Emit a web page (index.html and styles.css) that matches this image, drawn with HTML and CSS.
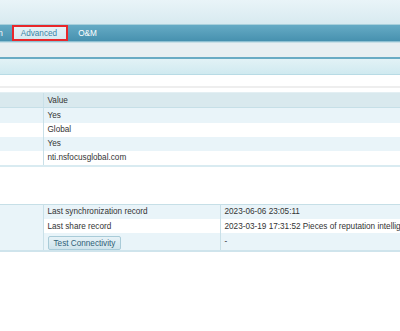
FILE: index.html
```html
<!DOCTYPE html>
<html>
<head>
    <meta charset="UTF-8">
    <link rel="stylesheet" href="styles.css">
</head>
<body>
    <div class="top-banner"></div>

    <div class="tab-bar">
        <div class="tabs">
            <span class="tab">Configuration</span>
            <span class="tab tab-active">Advanced</span>
            <span class="tab">O&amp;M</span>
        </div>
    </div>

    <div class="toolbar"></div>
    <div class="sub-bar"></div>

    <div class="content">
        <div class="divider"></div>

        <table class="grid grid-info">
            <thead>
                <tr>
                    <th class="col-label"></th>
                    <th>Value</th>
                </tr>
            </thead>
            <tbody>
                <tr class="odd tall"><td></td><td>Yes</td></tr>
                <tr><td></td><td>Global</td></tr>
                <tr class="odd"><td></td><td>Yes</td></tr>
                <tr class="tall"><td></td><td>nti.nsfocusglobal.com</td></tr>
            </tbody>
        </table>

        <table class="grid grid-records">
            <tbody>
                <tr class="odd tall">
                    <td class="col-label side" rowspan="3"></td>
                    <td class="col-name">Last synchronization record</td>
                    <td>2023-06-06 23:05:11</td>
                </tr>
                <tr>
                    <td class="col-name">Last share record</td>
                    <td>2023-03-19 17:31:52 Pieces of reputation intelligence shared: 0</td>
                </tr>
                <tr class="odd row-button">
                    <td class="col-name"><button class="btn">Test Connectivity</button></td>
                    <td>-</td>
                </tr>
            </tbody>
        </table>
    </div>
</body>
</html>
```

FILE: styles.css
```css
* {
    margin: 0;
    padding: 0;
    box-sizing: border-box;
}

body {
    font-family: "Liberation Sans", Arial, sans-serif;
    font-size: 8.2px;
    color: #333;
    background: #fff;
    overflow: hidden;
}

.top-banner {
    height: 25px;
    background: linear-gradient(to bottom, #e9f4f8 0%, #d8eaf0 100%);
    border-bottom: 1px solid #a8d0dc;
}

.tab-bar {
    height: 17px;
    background: linear-gradient(to bottom, #66abc5 0%, #4791af 100%);
    border-bottom: 1px solid #8fc0d2;
    overflow: hidden;
}

.tabs {
    display: flex;
    align-items: stretch;
    height: 100%;
    margin-left: -54px;
}

.tab {
    display: flex;
    align-items: center;
    padding: 0 8px;
    color: #fff;
    white-space: nowrap;
}

.tab:first-child {
    padding-right: 9px;
}

.tab-active {
    padding: 0 9px 0 7px;
    margin-right: 2px;
    color: #3b84a6;
    background: linear-gradient(to bottom, #e6f2f6 0%, #d6e9f0 100%);
    border: 2px solid #e8272a;
}

.toolbar {
    height: 17px;
    background: #e8eff2;
    border-top: 1px solid #c9dfe7;
    border-bottom: 2px solid #6aabc4;
}

.sub-bar {
    height: 16px;
    background: linear-gradient(to bottom, #e2f2f6 0%, #d0eaf0 100%);
    border-bottom: 1px solid #b8dbe5;
}

.content {
    padding-top: 11px;
}

.divider {
    height: 2px;
    background: #eeeeee;
    margin-bottom: 4px;
}

.grid {
    width: 100%;
    border-collapse: collapse;
    table-layout: fixed;
}

.grid th,
.grid td {
    padding: 0 4px;
    text-align: left;
    font-weight: normal;
    white-space: nowrap;
    overflow: hidden;
}

.col-label {
    width: 43px;
}

.grid th {
    height: 15px;
    background: #d9e9ee;
    border-bottom: 1px solid #c6dfe7;
    border-top: 1px solid #e3eff3;
}

.grid th + th,
.grid td + td {
    border-left: 1px solid #c9e0e8;
}

.grid-info td {
    height: 14px;
}

.grid-info .tall td {
    height: 15px;
}

.grid-info tbody tr:last-child td {
    border-bottom: 2px solid #d9ebf1;
}

.odd td {
    background: #e9f4f9;
}

.grid-records {
    margin-top: 37px;
    border-top: 1px solid #c6dfe7;
    border-bottom: 2px solid #cfe4ec;
}

.grid-records td {
    height: 14px;
}

.grid-records .tall td {
    height: 15px;
}

.grid-records .side {
    background: #e9f4f9;
    border-right: 1px solid #c9e0e8;
}

.grid-records td + td {
    border-left: 1px solid #c9e0e8;
}

.col-name {
    width: 177px;
}

.grid-records tr:not(:first-child) .col-name {
    border-left: 1px solid #c9e0e8;
}

.row-button td {
    height: 18px;
    vertical-align: top;
    padding-top: 3px;
}

.row-button td + td {
    padding-top: 4px;
}

.btn {
    font-family: "Liberation Sans", Arial, sans-serif;
    font-size: 8.2px;
    color: #2f5f77;
    height: 14px;
    padding: 0 5px;
    background: linear-gradient(to bottom, #e6f2f7 0%, #cfe4ec 100%);
    border: 1px solid #a9cbd8;
    border-radius: 2px;
    cursor: pointer;
}
```
